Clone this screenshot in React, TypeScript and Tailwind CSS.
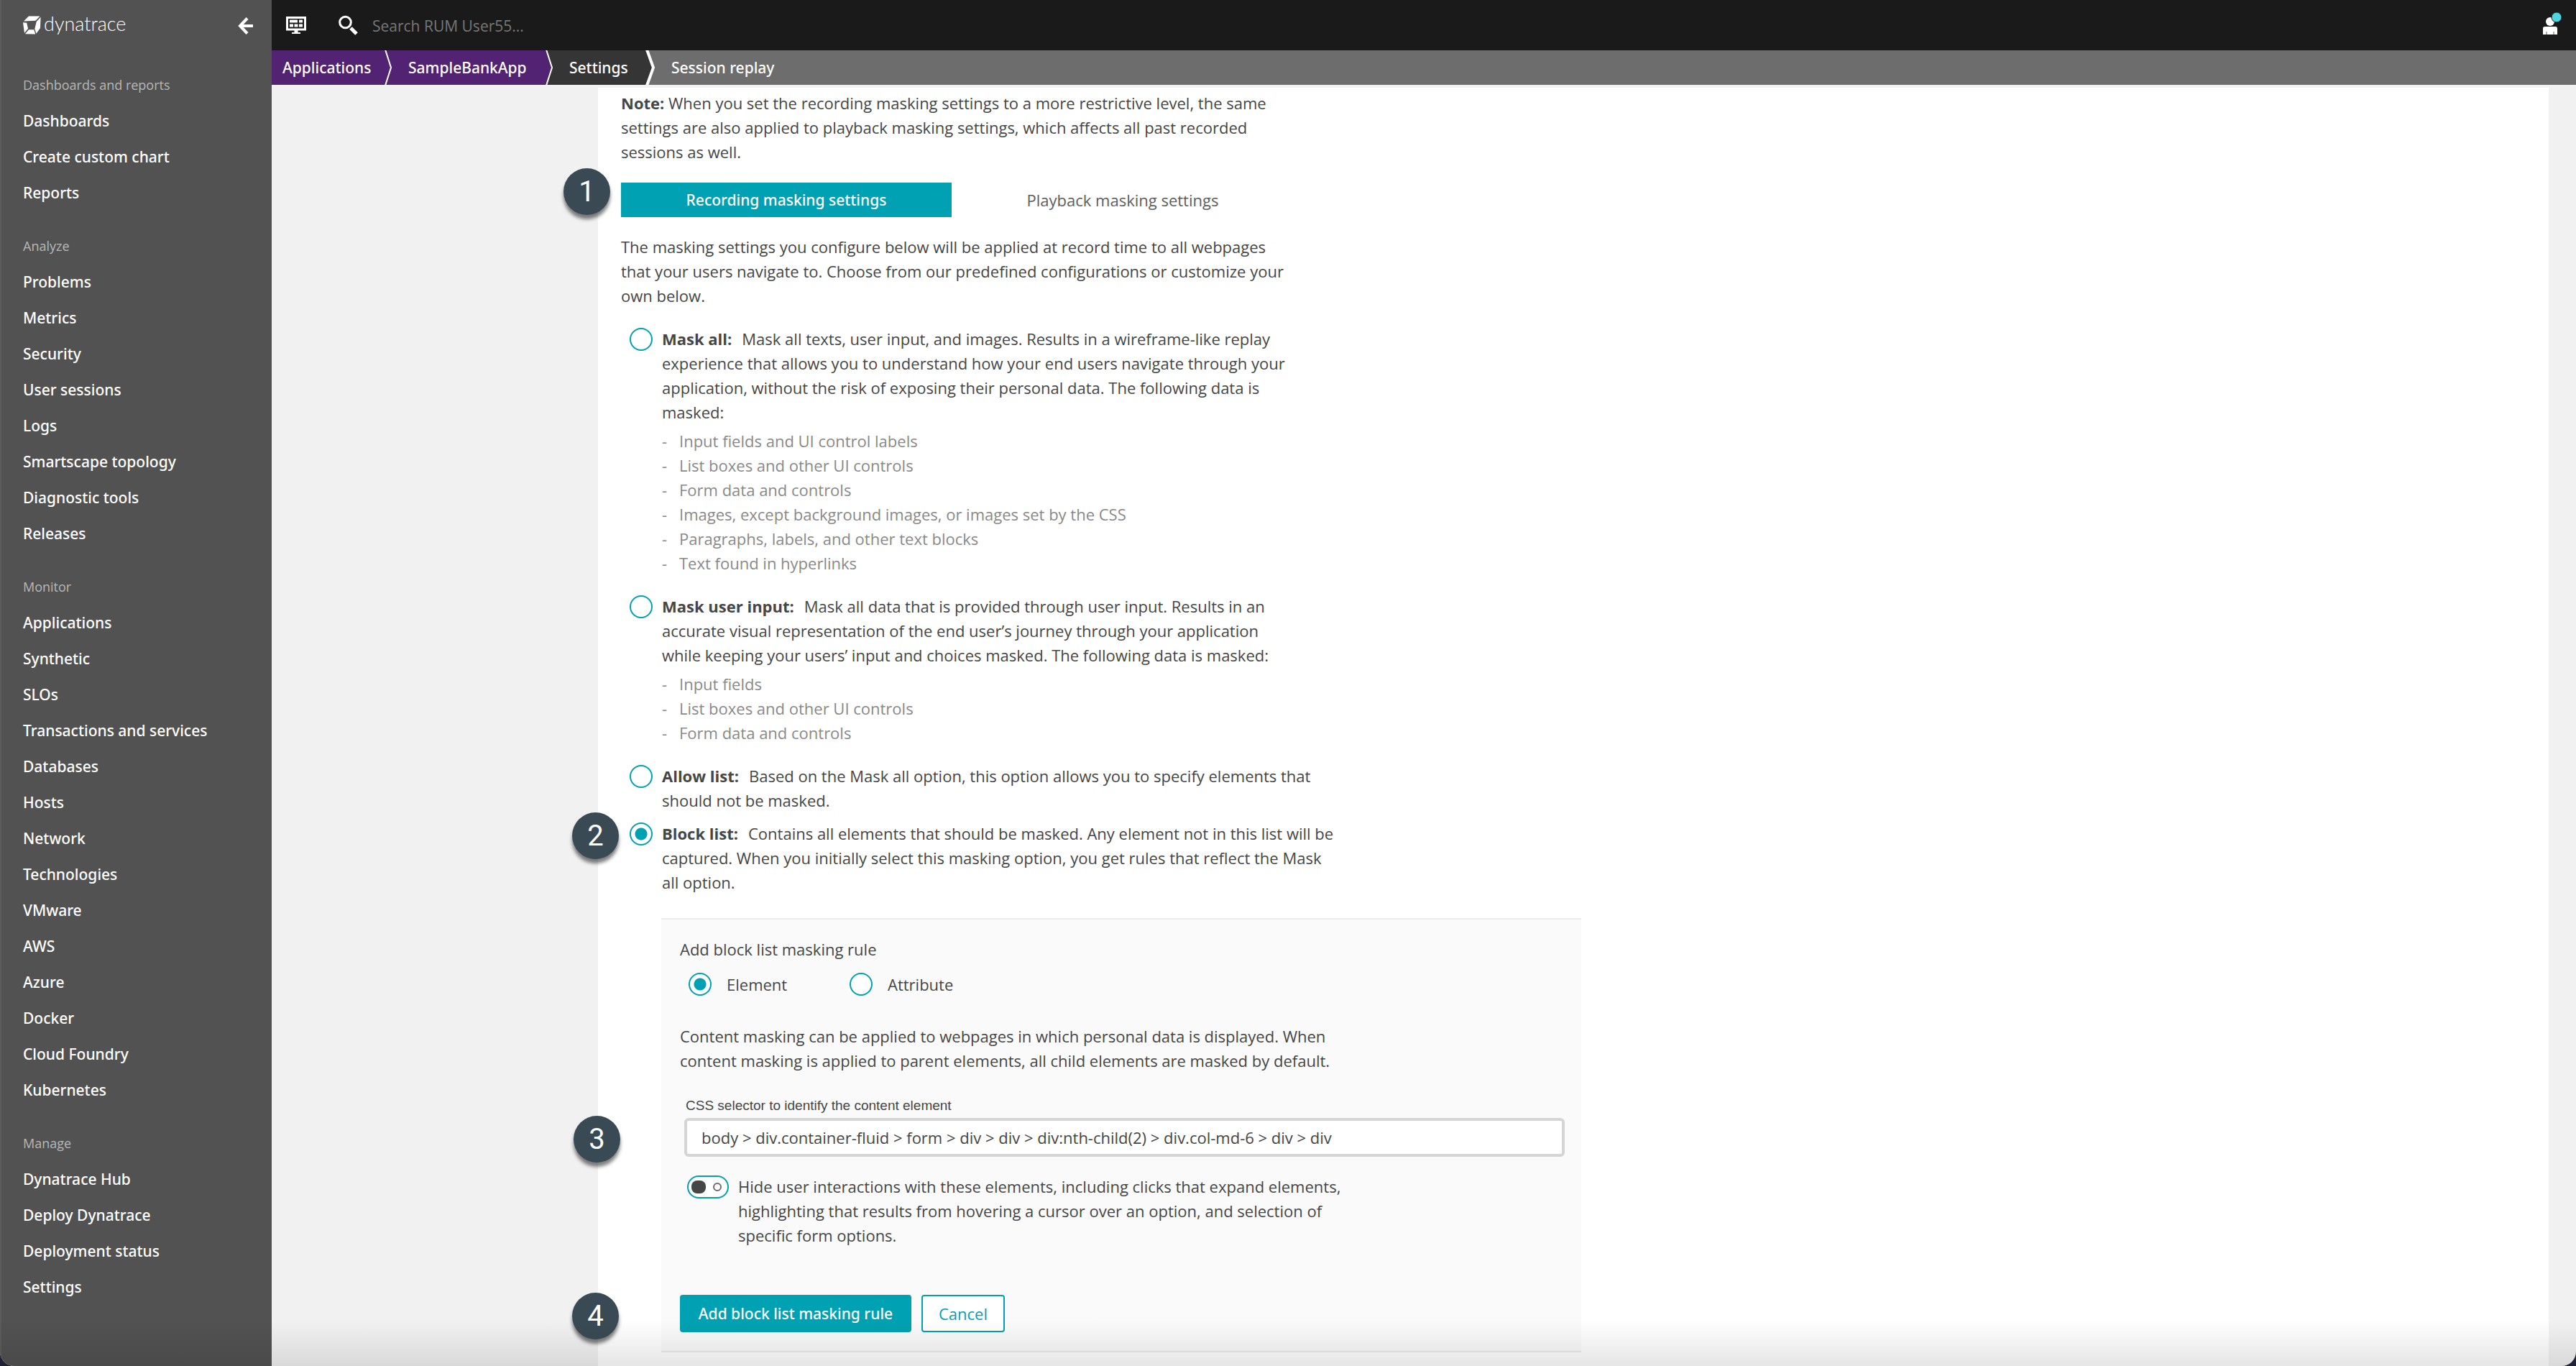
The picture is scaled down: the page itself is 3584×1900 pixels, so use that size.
import React from "react";

const navGroups = [
  { title: "Dashboards and reports", items: ["Dashboards", "Create custom chart", "Reports"] },
  {
    title: "Analyze",
    items: ["Problems", "Metrics", "Security", "User sessions", "Logs", "Smartscape topology", "Diagnostic tools", "Releases"],
  },
  {
    title: "Monitor",
    items: [
      "Applications", "Synthetic", "SLOs", "Transactions and services", "Databases", "Hosts", "Network",
      "Technologies", "VMware", "AWS", "Azure", "Docker", "Cloud Foundry", "Kubernetes",
    ],
  },
  { title: "Manage", items: ["Dynatrace Hub", "Deploy Dynatrace", "Deployment status", "Settings"] },
];

const radioClass =
  "size-8 shrink-0 cursor-pointer appearance-none rounded-full border-2 border-[#00a1b2] bg-white checked:bg-[radial-gradient(circle,#00a1b2_0_8px,#fff_9px)]";

function Badge({ n, className }: { n: number; className: string }) {
  return (
    <span
      className={`absolute flex size-[65px] items-center justify-center rounded-full bg-[#3a4a54] font-['Roboto',sans-serif] text-[40px] leading-none text-white shadow-[0_6px_5px_rgba(0,0,0,0.5)] ${className}`}
    >
      {n}
    </span>
  );
}

function Logo() {
  return (
    <a href="#home" className="mt-0.5 flex items-start gap-1 text-white" aria-label="dynatrace">
      <svg width="25" height="26" viewBox="0 0 25 26" fill="currentColor" aria-hidden="true">
        <path d="M1 7.5 8 .5h15.5L17.5 6.8z" />
        <path d="M0 9.2l5.2.5L7 17.8 2 24z" />
        <path d="M3 25.2l5-6h7.3l1.9 6.3z" />
        <path d="M18.8 8 24.6 1.8 24 17l-5.6 7.8L16.3 18z" />
      </svg>
      <span className="font-['Lato',sans-serif] text-[27px] leading-[22px] font-light">dynatrace</span>
    </a>
  );
}

function Sidebar() {
  return (
    <aside className="w-[378px] shrink-0 border-l-2 border-[#5c5c5c] bg-[#525252] pl-[30px]">
      <div className="flex h-[93px] items-start justify-between pt-5 pr-[25px]">
        <Logo />
        <button type="button" aria-label="Collapse menu" className="flex h-8 items-center text-white">
          <svg width="22" height="24" viewBox="0 0 22 24" fill="none" stroke="currentColor" strokeWidth="4" aria-hidden="true">
            <path d="M13 1.5 3 12l10 10.5M3 12h18" />
          </svg>
        </button>
      </div>
      <nav className="flex flex-col gap-6">
        {navGroups.map((g) => (
          <div key={g.title}>
            <h2 className="text-[18px] leading-[50px] text-[#b7b7b7]">{g.title}</h2>
            <ul>
              {g.items.map((item) => (
                <li key={item}>
                  <a href="#nav" className="block font-['Noto_Sans',sans-serif] text-[21px] leading-[50px] font-medium text-white">
                    {item}
                  </a>
                </li>
              ))}
            </ul>
          </div>
        ))}
      </nav>
    </aside>
  );
}

function TopBar() {
  return (
    <header className="flex h-[70px] items-center bg-[#1a1a1a] pr-5 pl-5">
      <button type="button" aria-label="Dashboards">
        <svg width="28" height="26" viewBox="0 0 28 26" fill="none" aria-hidden="true">
          <path d="M1.5 2.5h25v16.5h-25z" stroke="#fff" strokeWidth="3" />
          <path d="M5 5.5h11v4H5zM18 5.5h5v4h-5zM5 11.5h5v4H5zM11.5 11.5h5v4h-5zM18 11.5h5v4h-5z" fill="#fff" />
          <path d="M11.5 19h5v4h3.5v2H8v-2h3.5z" fill="#fff" />
        </svg>
      </button>
      <label htmlFor="search" className="ml-[45px]">
        <svg width="27" height="28" viewBox="0 0 27 28" fill="none" stroke="#fff" aria-label="Search">
          <circle cx="9.5" cy="10" r="7.8" strokeWidth="3" />
          <path d="M17 18l8 8" strokeWidth="5" />
        </svg>
      </label>
      <input
        id="search"
        type="text"
        placeholder="Search RUM User55..."
        className="ml-5 h-10 flex-1 bg-transparent pt-0.5 text-[21px] text-white outline-none placeholder:text-[#777]"
      />
      <button type="button" aria-label="User menu">
        <svg width="28" height="36" viewBox="0 0 28 36" aria-hidden="true">
          <circle cx="12" cy="13" r="6" fill="#fff" />
          <path d="M4.5 20h15a2.500 2.500 0 0 1 2.500 2.500V31H2v-8.500A2.500 2.500 0 0 1 4.5 20z" fill="#fff" />
          <path d="M6 27h2v4H6zM16 27h2v4h-2z" fill="#b0b0b0" />
          <circle cx="21" cy="7" r="7" fill="#4dd5e0" stroke="#1a1a1a" strokeWidth="1" />
        </svg>
      </button>
    </header>
  );
}

function Chevron({ from, to, stroke, width }: { from: string; to: string; stroke: number; width: number }) {
  return (
    <svg width={width} height="48" viewBox={`0 0 ${width} 48`} aria-hidden="true">
      <path d={`M0 0h${width}v48H0z`} fill={to} />
      <path d={`M0 0L${width - 2} 24 0 48z`} fill={from} />
      <path d={`M${stroke / 2} -1L${width - stroke / 2} 24 ${stroke / 2} 49`} fill="none" stroke="#fff" strokeWidth={stroke} />
    </svg>
  );
}

function Breadcrumb() {
  return (
    <nav
      aria-label="Breadcrumb"
      className="flex h-12 bg-[#6d6d6d] font-['Noto_Sans',sans-serif] text-[21px] leading-[48px] font-medium whitespace-nowrap text-white"
    >
      <a href="#applications" className="w-[157px] bg-[#522273] pl-[15px]">Applications</a>
      <Chevron from="#522273" to="#522273" stroke={2} width={10} />
      <a href="#app" className="w-[214px] bg-[#522273] pl-[23px]">SampleBankApp</a>
      <Chevron from="#522273" to="#353535" stroke={2} width={10} />
      <a href="#settings" className="w-[129px] bg-[#353535] pl-[23px]">Settings</a>
      <Chevron from="#353535" to="#6d6d6d" stroke={4} width={13} />
      <span className="pl-[23px]">Session replay</span>
    </nav>
  );
}

function MaskOption({
  id, title, text, list, width, checked, badge,
}: {
  id: string; title: string; text: string; list?: string[]; width: string; checked?: boolean; badge?: number;
}) {
  return (
    <div className="relative flex gap-[13px] pl-3">
      {badge && <Badge n={badge} className="-top-3 -left-17" />}
      <input type="radio" id={id} name="masking" defaultChecked={checked} className={`mt-0.5 ${radioClass}`} />
      <div>
        <label htmlFor={id} className={`block ${width}`}>
          <strong className="mr-3.5 font-bold">{title}</strong>
          {text}
        </label>
        {list && (
          <ul className="mt-1.5 text-[#898989]">
            {list.map((l) => (
              <li key={l} className="flex">
                <span className="w-6">-</span>
                {l}
              </li>
            ))}
          </ul>
        )}
      </div>
    </div>
  );
}

function RulePanel() {
  return (
    <section className="mt-[33px] ml-14 max-w-[1280px] border-y-2 border-[#ebebeb] bg-[#fafafa] pt-6 pr-[23px] pb-[26px] pl-[26px]">
      <h3>Add block list masking rule</h3>
      <div className="mt-4 flex h-8 items-center pl-3">
        <label className="flex w-56 items-center gap-[21px]">
          <input type="radio" name="ruleType" defaultChecked className={radioClass} />
          Element
        </label>
        <label className="flex items-center gap-[21px]">
          <input type="radio" name="ruleType" className={radioClass} />
          Attribute
        </label>
      </div>
      <p className="mt-[39px] max-w-[940px]">
        Content masking can be applied to webpages in which personal data is displayed. When content masking is applied to
        parent elements, all child elements are masked by default.
      </p>
      <label htmlFor="selector" className="mt-[34px] block pl-2 font-['Liberation_Sans',sans-serif] text-[19px] leading-6">
        CSS selector to identify the content element
      </label>
      <div className="relative mt-[5px] ml-1.5">
        <Badge n={3} className="-top-[3px] -left-[154px]" />
        <input
          id="selector"
          type="text"
          defaultValue="body > div.container-fluid > form > div > div > div:nth-child(2) > div.col-md-6 > div > div"
          className="block h-[54px] w-full rounded-md border-4 border-[#d5d5d5] bg-white px-5 outline-none"
        />
      </div>
      <div className="mt-6 flex gap-[13px] pl-2.5">
        <button
          type="button"
          role="switch"
          aria-checked="false"
          aria-labelledby="hide-label"
          className="mt-0.5 flex h-8 w-[58px] shrink-0 items-center justify-between rounded-full border-2 border-[#00a1b2] bg-white pr-2 pl-1"
        >
          <span className="h-[18px] w-5 rounded-lg bg-[#454646]" />
          <span className="size-3 rounded-full border-2 border-[#6d6d6d]" />
        </button>
        <span id="hide-label" className="max-w-[870px]">
          Hide user interactions with these elements, including clicks that expand elements, highlighting that results from
          hovering a cursor over an option, and selection of specific form options.
        </span>
      </div>
      <div className="relative mt-[66px] flex gap-3.5">
        <Badge n={4} className="-top-[3px] -left-[150px]" />
        <button
          type="button"
          className="h-[52px] w-[322px] rounded-[4px] bg-[#00a1b2] font-['Noto_Sans',sans-serif] text-[21px] font-medium text-white"
        >
          Add block list masking rule
        </button>
        <button type="button" className="h-[52px] w-[116px] rounded-[4px] border-2 border-[#00a1b2] bg-white text-[#00a1b2]">
          Cancel
        </button>
      </div>
    </section>
  );
}

export default function App() {
  return (
    <div className="min-h-screen bg-[#1e2233]">
      <div className="relative flex min-h-screen overflow-hidden rounded-b-[20px] bg-[#f1f1f1] font-['Open_Sans',sans-serif] text-[22px] leading-[34px] text-[#454646]">
        <Sidebar />
        <div className="flex min-w-0 flex-1 flex-col">
          <TopBar />
          <Breadcrumb />
          <main className="mt-1 mr-[38px] ml-[454px] flex-1 bg-white pt-1 pb-4 pl-8">
            <p className="max-w-[930px]">
              <strong className="font-bold">Note:</strong> When you set the recording masking settings to a more restrictive
              level, the same settings are also applied to playback masking settings, which affects all past recorded sessions
              as well.
            </p>
            <div className="relative mt-[26px] flex gap-2">
              <Badge n={1} className="-top-5 -left-20" />
              <button
                type="button"
                className="h-12 w-[460px] bg-[#00a1b2] font-['Noto_Sans',sans-serif] text-[21px] font-medium text-white"
              >
                Recording masking settings
              </button>
              <button type="button" className="h-12 w-[460px] text-[#5e5e5e]">
                Playback masking settings
              </button>
            </div>
            <p className="mt-6 max-w-[930px]">
              The masking settings you configure below will be applied at record time to all webpages that your users navigate
              to. Choose from our predefined configurations or customize your own below.
            </p>
            <div className="mt-[26px] flex flex-col gap-[26px]">
              <MaskOption
                id="mask-all"
                title="Mask all:"
                width="max-w-[890px]"
                text="Mask all texts, user input, and images. Results in a wireframe-like replay experience that allows you to understand how your end users navigate through your application, without the risk of exposing their personal data. The following data is masked:"
                list={[
                  "Input fields and UI control labels",
                  "List boxes and other UI controls",
                  "Form data and controls",
                  "Images, except background images, or images set by the CSS",
                  "Paragraphs, labels, and other text blocks",
                  "Text found in hyperlinks",
                ]}
              />
              <MaskOption
                id="mask-input"
                title="Mask user input:"
                width="max-w-[870px]"
                text="Mask all data that is provided through user input. Results in an accurate visual representation of the end user’s journey through your application while keeping your users’ input and choices masked. The following data is masked:"
                list={["Input fields", "List boxes and other UI controls", "Form data and controls"]}
              />
              <div className="flex flex-col gap-3">
                <MaskOption
                  id="allow-list"
                  title="Allow list:"
                  width="max-w-[940px]"
                  text="Based on the Mask all option, this option allows you to specify elements that should not be masked."
                />
                <MaskOption
                  id="block-list"
                  title="Block list:"
                  width="max-w-[940px]"
                  checked
                  badge={2}
                  text="Contains all elements that should be masked. Any element not in this list will be captured. When you initially select this masking option, you get rules that reflect the Mask all option."
                />
              </div>
            </div>
            <RulePanel />
          </main>
        </div>
        <div className="pointer-events-none absolute inset-x-0 bottom-0 h-16 bg-linear-to-t from-black/10 to-transparent" />
      </div>
    </div>
  );
}
